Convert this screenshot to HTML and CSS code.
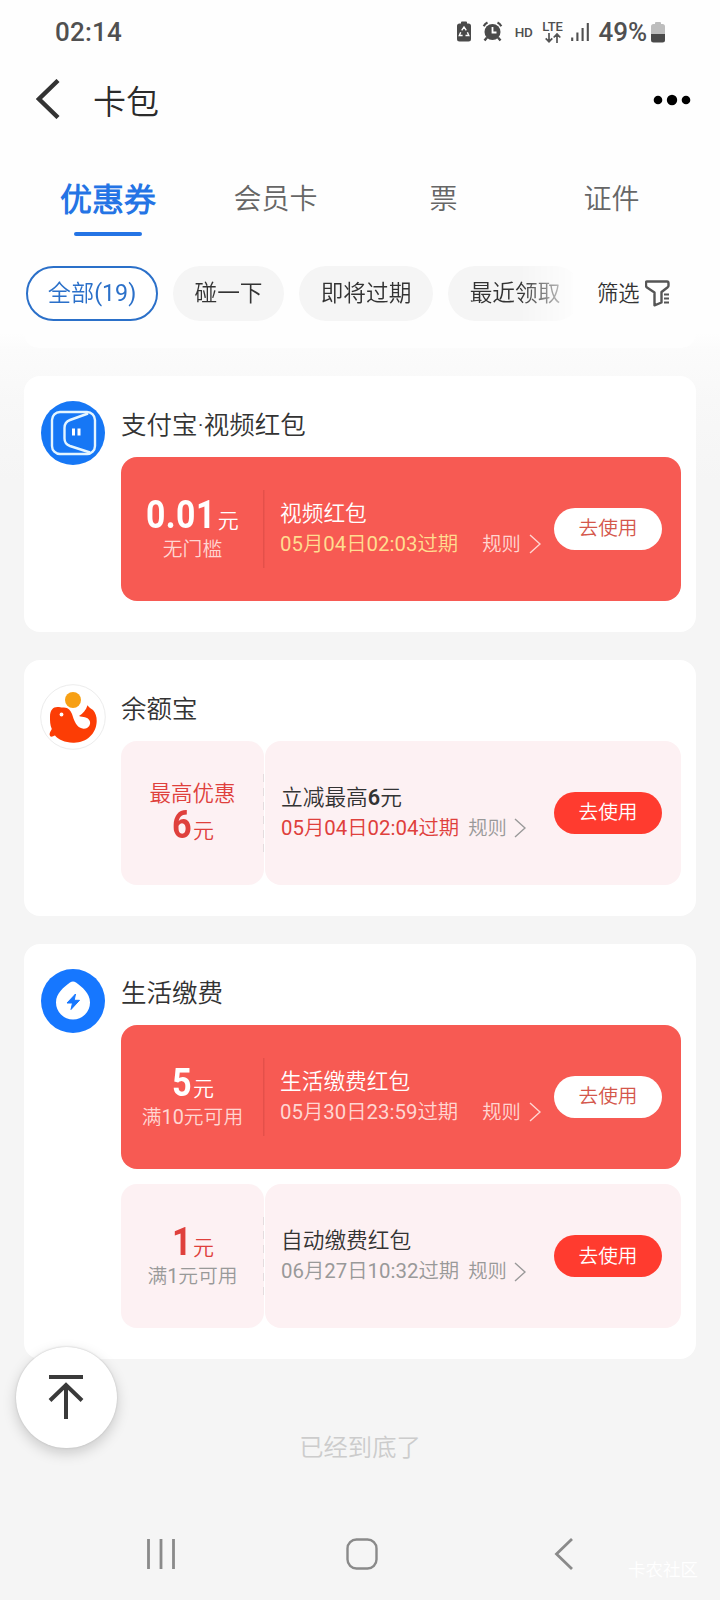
FILE: index.html
```html
<!DOCTYPE html>
<html lang="zh-CN">
<head>
<meta charset="utf-8">
<meta name="viewport" content="width=device-width">
<title>卡包</title>
<link rel="stylesheet" href="styles.css">
</head>
<body>
<div class="screen">
  <div class="top">
    <div class="status">
      <span class="time">02:14</span>
      <svg class="status-icons" width="46" height="24" viewBox="0 0 46 24">
        <g fill="#4a4a4a">
          <path d="M4 2.500V1.500a1 1 0 0 1 1-1h4a1 1 0 0 1 1 1v1h1.500A2.500 2.500 0 0 1 14 5v13a2.500 2.500 0 0 1-2.500 2.500h-9A2.500 2.500 0 0 1 0 18V5a2.500 2.500 0 0 1 2.500-2.500z"/>
          <circle cx="35.500" cy="11" r="8"/>
          <path d="M30 16.500l-2.500 3M41 16.500l2.500 3" stroke="#4a4a4a" stroke-width="2.400"/>
          <path d="M26.700 5.200Q28 2.800 30.500 1.600M44.300 5.200Q43 2.800 40.500 1.600" fill="none" stroke="#4a4a4a" stroke-width="2.200"/>
        </g>
        <path d="M35.500 6v5.500h4" fill="none" stroke="#fff" stroke-width="1.800"/>
        <path d="M4.700 9.300L7 6l2.300 3.300M10.400 11.200l1.400 3.300H8.500M5.600 14.500H2.300l1.400-3.300" fill="none" stroke="#fff" stroke-width="1.400"/>
      </svg>
      <span class="hd">HD</span>
      <span class="lte"><span>LTE</span>
        <svg width="16" height="10" viewBox="0 0 16 10"><path d="M4 0v8.500M.7 5.300L4 8.700l3.300-3.400M12 10V1.200M8.700 4.500L12 1l3.300 3.500" fill="none" stroke="#555" stroke-width="1.700"/></svg>
      </span>
      <svg class="signal" width="18" height="20" viewBox="0 0 18 20"><path d="M1.200 15.500V19M6.400 10.500V19M11.600 6V19M16.800 1V19" stroke="#505050" stroke-width="2.100"/></svg>
      <span class="pct">49%</span>
      <svg class="battery" width="14" height="21" viewBox="0 0 14 21"><path d="M4 2V1a1 1 0 0 1 1-1h4a1 1 0 0 1 1 1v1h1.500A2.500 2.500 0 0 1 14 4.500V12H0V4.500A2.500 2.500 0 0 1 2.500 2z" fill="#bdbdbd"/><path d="M0 12h14v6a2.500 2.500 0 0 1-2.500 2.500h-9A2.500 2.500 0 0 1 0 18z" fill="#4a4a4a"/></svg>
    </div>
    <header class="header">
      <svg width="24" height="40" viewBox="0 0 24 40"><path d="M22 1.500L3 20 22 38.500" fill="none" stroke="#333" stroke-width="4.400"/></svg>
      <h1>卡包</h1>
      <svg class="more" width="38" height="12" viewBox="0 0 38 12"><circle cx="5" cy="6" r="4.300"/><circle cx="19" cy="6" r="5.200"/><circle cx="33" cy="6" r="4.300"/></svg>
    </header>
    <nav class="tabs">
      <a class="tab active">优惠券</a><a class="tab">会员卡</a><a class="tab">票</a><a class="tab">证件</a>
    </nav>
    <div class="filters">
      <div class="chips">
        <span class="chip chip-all">全部(19)</span><span class="chip chip-tap">碰一下</span><span class="chip chip-soon">即将过期</span><span class="chip chip-recent">最近领取</span>
      </div>
      <span class="filter"><span>筛选</span>
        <svg width="25" height="27" viewBox="0 0 25 27"><path d="M2 1.500h20q1.500 0 1.500 1.800v2.200q0 1-.8 1.700L16.500 12v10.500L9.500 25.300V12.500L2 7.500Q1 6.700 1 5.500V3q0-1.500 1-1.500z" fill="none" stroke="#555" stroke-width="2.400" stroke-linejoin="round"/><path d="M19 14.500h5M19 18.500h5M19 22.500h5" stroke="#555" stroke-width="1.900"/></svg>
      </span>
    </div>
  </div>

  <main class="list">
    <div class="card-tail"></div>

    <section class="card">
      <svg class="logo" width="66" height="66" viewBox="0 0 66 66"><circle cx="33" cy="33" r="32" fill="#1677f5"/><rect x="12" y="12" width="43" height="42" rx="8" fill="none" stroke="#e4f5ff" stroke-width="2.400"/><path d="M48 13.500L30 20q-5.500 2-5.500 8v10.500q0 5.500 5.500 7.500l20 6.500" fill="none" stroke="#e4f5ff" stroke-width="2.400"/><path d="M33.500 28.500v7M39 28.500v7" stroke="#fff" stroke-width="3"/></svg>
      <div class="body">
        <h2>支付宝·视频红包</h2>
        <div class="coupon red">
          <div class="value"><div class="amount"><b class="wide">0.01</b>元</div><div class="cond">无门槛</div></div>
          <div class="detail">
            <div class="info"><div class="name">视频红包</div><div class="meta"><span class="date yellow">05月04日02:03过期</span><span class="rule">规则</span><svg width="12" height="20" viewBox="0 0 12 20"><path d="M1 1l10 9L1 19" fill="none" stroke="currentColor" stroke-width="1.400"/></svg></div></div>
            <button class="use">去使用</button>
          </div>
        </div>
      </div>
    </section>

    <section class="card">
      <svg class="logo" width="66" height="66" viewBox="0 0 66 66"><circle cx="33" cy="33" r="32.300" fill="#fff" stroke="#ececec"/><path d="M10 33C10 26 13 23 17.500 23C20 23 21 23.700 24 23.500C28.500 23.500 30.500 26.500 32 30C34 36 36 44 43.500 44.700C48.500 45 51.500 40 49.500 36.500C47.500 32.500 43 33.500 39 32C43 30 46 26 47.500 21.300C49 23.500 51 25 53 26C55.500 29 56.800 32.500 56.700 37C56.500 50 46 59.300 33 58.700C25 58.500 18 55.500 15 51.500C13.500 52 12 53 10.500 52.500C8.500 50 10.500 47.500 11.800 45C10 41 10 37 10 33Z" fill="#fc3d05"/><circle cx="33" cy="16" r="8" fill="#f7a014"/><circle cx="21.500" cy="30.500" r="1.900" fill="#fff"/></svg>
      <div class="body">
        <h2>余额宝</h2>
        <div class="coupon pink">
          <div class="value flipped"><div class="cond best">最高优惠</div><div class="amount"><b>6</b>元</div></div>
          <div class="detail">
            <div class="info"><div class="name">立减最高<b>6</b>元</div><div class="meta"><span class="date alert">05月04日02:04过期</span><span class="rule">规则</span><svg width="12" height="20" viewBox="0 0 12 20"><path d="M1 1l10 9L1 19" fill="none" stroke="currentColor" stroke-width="1.400"/></svg></div></div>
            <button class="use">去使用</button>
          </div>
        </div>
      </div>
    </section>

    <section class="card">
      <svg class="logo" width="66" height="66" viewBox="0 0 66 66"><circle cx="33" cy="33" r="32" fill="#1677ff"/><path d="M30 14.500q3-2.200 6 0c6 4.500 14 10.500 14 20a17 17 0 0 1-34 0c0-9.500 8-15.500 14-20z" fill="#fff"/><path d="M35.500 26L27 35h5.500l-1.500 6.500 8.500-9.200h-5.300z" fill="#1677ff" stroke="#1677ff" stroke-linejoin="round"/></svg>
      <div class="body">
        <h2>生活缴费</h2>
        <div class="coupon red">
          <div class="value"><div class="amount"><b>5</b>元</div><div class="cond">满10元可用</div></div>
          <div class="detail">
            <div class="info"><div class="name">生活缴费红包</div><div class="meta"><span class="date">05月30日23:59过期</span><span class="rule">规则</span><svg width="12" height="20" viewBox="0 0 12 20"><path d="M1 1l10 9L1 19" fill="none" stroke="currentColor" stroke-width="1.400"/></svg></div></div>
            <button class="use">去使用</button>
          </div>
        </div>
        <div class="coupon pink">
          <div class="value"><div class="amount"><b>1</b>元</div><div class="cond">满1元可用</div></div>
          <div class="detail">
            <div class="info"><div class="name">自动缴费红包</div><div class="meta"><span class="date">06月27日10:32过期</span><span class="rule">规则</span><svg width="12" height="20" viewBox="0 0 12 20"><path d="M1 1l10 9L1 19" fill="none" stroke="currentColor" stroke-width="1.400"/></svg></div></div>
            <button class="use">去使用</button>
          </div>
        </div>
      </div>
    </section>
    <p class="end">已经到底了</p>
  </main>

  <div class="to-top"><svg width="36" height="46" viewBox="0 0 36 46"><path d="M1 3h34M18 45V11M2 26.500L18 11l16 15.500" fill="none" stroke="#3a3a3a" stroke-width="4"/></svg></div>
  <footer class="sysnav">
    <svg width="28" height="32" viewBox="0 0 28 32"><path d="M1.500 1v30M14 1v30M26.500 1v30" stroke="#8a8a8a" stroke-width="2.800"/></svg>
    <svg class="home" width="32" height="32" viewBox="0 0 32 32"><rect x="1.500" y="1.500" width="29" height="29" rx="9" fill="none" stroke="#8a8a8a" stroke-width="2.400"/></svg>
    <svg width="20" height="34" viewBox="0 0 20 34"><path d="M18 2L2.500 17 18 32" fill="none" stroke="#8a8a8a" stroke-width="2.800"/></svg>
  </footer>
  <span class="watermark">卡农社区</span>
</div>
</body>
</html>
```

FILE: styles.css
```css
* { box-sizing: border-box; }
body { margin: 0; font-family: Roboto, "Noto Sans CJK SC DemiLight", "Noto Sans CJK SC", sans-serif; font-weight: 400; color: #333; }
svg { display: block; flex: none; }
h1, h2, p { margin: 0; font-weight: 350; }

.screen {
  position: relative;
  width: 720px;
  height: 1600px;
  overflow: hidden;
  display: flex;
  flex-direction: column;
  background: linear-gradient(#fefefe 333px, #fbfbfb 350px, #f8f8f8 400px, #f5f5f5 480px);
}
.top { height: 333px; background: #fefefe; flex: none; }

/* status bar */
.status { height: 64px; padding: 0 55px 0 55px; display: flex; align-items: center; font-size: 26px; font-weight: 500; color: #505050; }
.time { margin-right: auto; letter-spacing: .2px; }
.status-icons { margin-top: 2px; }
.hd { font-size: 13.500px; margin: -1px 9px 0 12px; letter-spacing: -.3px; }
.lte { width: 22px; display: flex; flex-direction: column; align-items: center; font-size: 13px; line-height: 11px; gap: 1px; }
.lte span { height: 11px; }
.signal { margin: 0 10px 0 7px; }
.pct { letter-spacing: -.1px; }
.battery { margin-left: 4px; margin-top: 1px; }

.header { height: 76px; padding: 0 29px 4px 36px; display: flex; align-items: center; }
.header svg:first-child { margin-top: -2px; }
.header h1 { font-size: 33px; line-height: 44px; margin: 6px auto 0 33px; color: #2b2b2b; }

/* tabs */
.tabs { height: 126px; padding: 37px 24px 0; display: grid; grid-template-columns: repeat(4, 1fr); text-align: center; font-weight: 350; }
.tab { height: 60px; font-size: 28px; line-height: 46px; color: #666; margin-left: -1px; }
.tab.active { font-size: 32px; font-weight: 700; color: #2474e5; margin-left: 0; }
.tab.active::after { content: ""; display: block; width: 68px; height: 4px; margin: 9px auto 0; border-radius: 2px; background: #2474e5; }

/* filter chips */
.filters { height: 55px; display: flex; align-items: center; }
.chips { width: 573px; padding-left: 26px; display: flex; gap: 15px; overflow: hidden; -webkit-mask-image: linear-gradient(90deg, #000 520px, transparent 580px); mask-image: linear-gradient(90deg, #000 520px, transparent 580px); }
.chip { flex: none; height: 55px; line-height: 55px; border-radius: 28px; background: #f5f5f5; text-align: center; font-size: 22.700px; font-weight: 350; }
.chip-all { width: 132px; line-height: 50px; border: 2px solid #2b70c9; background: #fff; color: #2b70c9; font-size: 23.200px; font-weight: 400; }
.chip-tap { width: 111px; }
.chip-soon { width: 134px; }
.chip-recent { width: 134px; }
.filter { margin-left: 24px; display: flex; align-items: center; gap: 5px; font-size: 21.300px; white-space: nowrap; font-weight: 350; }
.filter span { padding-bottom: 4px; }

/* cards */
.list { padding: 0 24px; display: flex; flex-direction: column; gap: 28px; }
.card-tail { height: 15px; border-radius: 0 0 16px 16px; background: #fefefe; }
.card { display: flex; gap: 15px; padding: 24px 15px 31.400px 16px; border-radius: 16px; background: #fff; }
.body { width: 560px; display: flex; flex-direction: column; gap: 15px; }
.body h2 { height: 42px; line-height: 50px; font-size: 25.500px; }

.coupon { height: 143.600px; display: flex; }
.coupon + .coupon { margin-top: .8px; }
.value { width: 143px; display: flex; flex-direction: column; align-items: center; padding-top: 38px; }
.amount { height: 40px; line-height: 43px; font-size: 21px; white-space: nowrap; font-weight: 350; }
.amount b { display: inline-block; font-size: 38px; line-height: 40px; font-weight: 700; transform: scaleX(.9); }
.amount .wide { letter-spacing: .5px; transform: scaleX(.89); transform-origin: left; margin-right: -7px; }
.cond { height: 26px; line-height: 29px; font-size: 19.800px; }
.detail { flex: 1; display: flex; align-items: center; padding: 0 19px 0 17px; }
.info { flex: 1; }
.name { height: 31px; line-height: 31px; font-size: 21.700px; font-weight: 350; }
.name b { font-weight: 600; }
.meta { display: flex; align-items: center; height: 31px; line-height: 31px; font-size: 20.400px; white-space: nowrap; }
.rule { font-size: 19.300px; margin: 0 7px 0 9px; font-weight: 350; }
.use { flex: none; width: 108px; height: 42px; padding: 0 0 4px; border: 0; border-radius: 21px; font: inherit; font-size: 19.700px; font-weight: 350; }

.red { border-radius: 16px; background: #f75a53; color: #fff; }
.red .detail { margin-left: -1px; background: linear-gradient(#e4504a, #e4504a) 0 50% / 1.500px 78px no-repeat; }
.red .rule { margin-left: 24px; margin-right: 8px; }
.red .cond, .red .meta { color: #ffd6d2; }
.red .date.yellow { color: #ffdc90; }
.red .use { background: #fff; color: #d4574b; }

.pink .value, .pink .detail { border-radius: 16px; background-color: #fdf1f3; }
.pink .value { background-image: repeating-linear-gradient(#e4dcde 0 8px, transparent 8px 14px); background-size: 1.500px 78px; background-position: 100% 50%; background-repeat: no-repeat; }
.pink .detail { margin-left: 1px; padding-left: 16px; }
.pink .amount, .pink .cond.best, .pink .alert { color: #df403c; }
.pink .cond, .pink .meta { color: #999; }
.pink .use { background: #ff3b2f; color: #fff; }
.flipped .cond.best { font-size: 21.500px; font-weight: 350; }

.end { text-align: center; margin-top: 42.500px; font-size: 24.300px; line-height: 36px; color: #ccc; }

.to-top { position: absolute; left: 15.500px; top: 1347px; width: 101px; height: 101px; border-radius: 50%; background: #fff; box-shadow: 0 0 2px #bbb, 0 5px 14px rgba(0,0,0,.18); display: flex; align-items: center; justify-content: center; padding-bottom: 2px; }
.sysnav { position: absolute; left: 147px; right: 146px; top: 1537px; display: flex; justify-content: space-between; align-items: center; }
.home { margin-right: 5px; }
.watermark { position: absolute; right: 22px; top: 1556px; font-size: 17.500px; color: #fff; }
```
